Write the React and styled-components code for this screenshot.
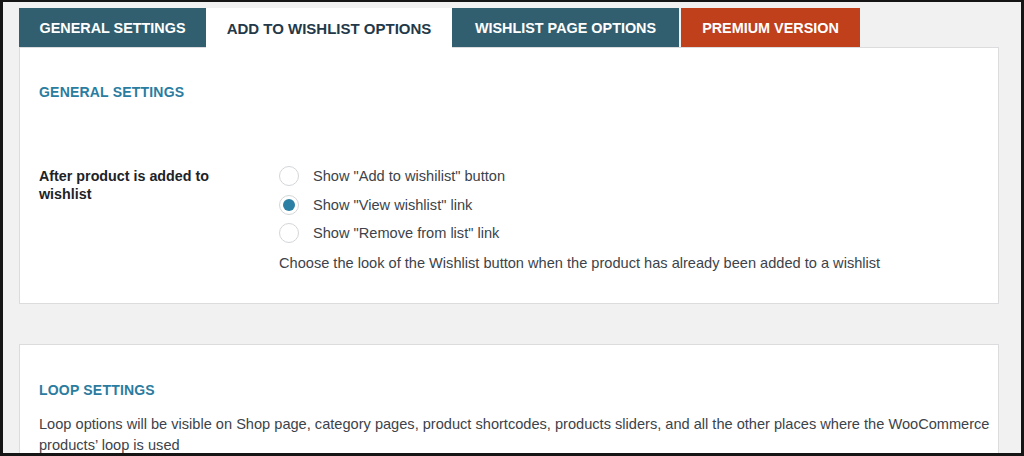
import React from 'react';
import styled, { createGlobalStyle } from 'styled-components';

const GlobalStyle = createGlobalStyle`
	html, body {
		margin: 0;
		padding: 0;
		background: #f1f1f1;
	}
	* {
		box-sizing: border-box;
	}
`;

const Page = styled.div`
	width: 1024px;
	height: 456px;
	overflow: hidden;
	border: 3px solid #151515;
	border-top-width: 2px;
	background: #f1f1f1;
	padding: 6px 22px 0 16px;
	font-family: 'Liberation Sans', Arial, sans-serif;
	color: #3c434a;
`;

const TabBar = styled.div`
	display: flex;
	align-items: flex-end;
`;

const Tab = styled.div`
	height: 39px;
	width: ${(p) => p.$w}px;
	display: flex;
	align-items: center;
	justify-content: center;
	margin-right: ${(p) => p.$gap || 0}px;
	font-size: ${(p) => (p.$active ? 15 : 14.4)}px;
	font-weight: 700;
	white-space: nowrap;
	color: ${(p) => (p.$active ? '#23394a' : '#fff')};
	background: ${(p) =>
		p.$active ? '#fff' : p.$premium ? '#bf401b' : '#325f70'};
	${(p) => p.$active && 'height: 40px; margin-bottom: -1px; position: relative; z-index: 1;'}
`;

const Panel = styled.section`
	background: #fff;
	border: 1px solid #dcdcde;
	padding: ${(p) => p.$top}px 8px ${(p) => p.$bottom}px 19px;
	margin-bottom: 40px;
`;

const Heading = styled.h2`
	margin: 0;
	font-size: 14px;
	line-height: 20px;
	font-weight: 700;
	color: #2a7ca0;
	letter-spacing: 0.2px;
`;

const Row = styled.div`
	display: grid;
	grid-template-columns: 240px 1fr;
	margin-top: 64px;
`;

const Label = styled.div`
	font-size: 14.3px;
	font-weight: 700;
	line-height: 18px;
	color: #1d2327;
	max-width: 200px;
	padding-top: 1px;
`;

const Options = styled.div`
	display: flex;
	flex-direction: column;
`;

const Option = styled.label`
	display: flex;
	align-items: center;
	height: 28.5px;
	font-size: 14.6px;
	color: #3c434a;
	margin-top: ${(p) => (p.$first ? '-4px' : '0')};
`;

const Radio = styled.span`
	width: 20px;
	height: 20px;
	border-radius: 50%;
	border: 1px solid #d3d6d9;
	background: #fff;
	margin-right: 14px;
	display: flex;
	align-items: center;
	justify-content: center;
	&::after {
		content: '';
		width: 12px;
		height: 12px;
		border-radius: 50%;
		background: #2b7fa4;
		display: ${(p) => (p.$checked ? 'block' : 'none')};
	}
`;

const Description = styled.p`
	margin: 5px 0 0;
	font-size: 14.6px;
	line-height: 20px;
	color: #3c434a;
`;

const Text = styled.p`
	margin: 14px 0 0;
	font-size: 14.6px;
	line-height: 21px;
	color: #3c434a;
`;

const options = [
	'Show "Add to wishilist" button',
	'Show "View wishlist" link',
	'Show "Remove from list" link',
];

const App = () => (
	<Page>
		<GlobalStyle />
		<TabBar>
			<Tab $w={187}>GENERAL SETTINGS</Tab>
			<Tab $active $w={246}>ADD TO WISHLIST OPTIONS</Tab>
			<Tab $w={227} $gap={2}>WISHLIST PAGE OPTIONS</Tab>
			<Tab $premium $w={179}>PREMIUM VERSION</Tab>
		</TabBar>
		<Panel $top={34} $bottom={30}>
			<Heading>GENERAL SETTINGS</Heading>
			<Row>
				<Label>After product is added to wishlist</Label>
				<div>
					<Options>
						{options.map((o, i) => (
							<Option key={o} $first={i === 0}>
								<Radio $checked={i === 1} />
								{o}
							</Option>
						))}
					</Options>
					<Description>
						Choose the look of the Wishlist button when the product has already been added to a
						wishlist
					</Description>
				</div>
			</Row>
		</Panel>
		<Panel $top={35} $bottom={20}>
			<Heading>LOOP SETTINGS</Heading>
			<Text>
				Loop options will be visible on Shop page, category pages, product shortcodes, products
				sliders, and all the other places where the WooCommerce products’ loop is used
			</Text>
		</Panel>
	</Page>
);

export default App;
